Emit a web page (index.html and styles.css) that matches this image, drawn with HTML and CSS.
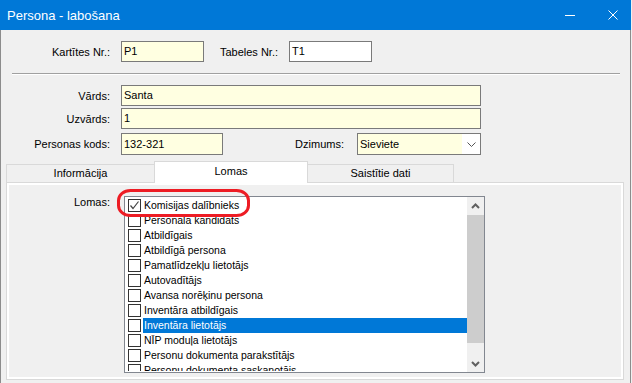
FILE: index.html
```html
<!DOCTYPE html>
<html lang="lv">
<head>
<meta charset="utf-8">
<title>Persona - labošana</title>
<link rel="stylesheet" href="styles.css">
</head>
<body>
<div class="window">
  <div class="titlebar">
    <span class="title">Persona - labošana</span>
    <span class="tb-btn tb-min"><svg width="10" height="10" viewBox="0 0 10 10"><path d="M0 5.5H10" stroke="#fff" stroke-width="1"/></svg></span>
    <span class="tb-btn tb-close"><svg width="10" height="10" viewBox="0 0 10 10"><path d="M0.5 0.5L9.5 9.5M9.5 0.5L0.5 9.5" stroke="#fff" stroke-width="1"/></svg></span>
  </div>
  <div class="client">
    <div class="row">
      <span class="lbl">Kartītes Nr.:</span>
      <div class="field yellow w-short">P1</div>
      <span class="lbl lbl-tab">Tabeles Nr.:</span>
      <div class="field white w-short">T1</div>
    </div>
    <div class="sep"></div>
    <div class="row">
      <span class="lbl">Vārds:</span>
      <div class="field yellow w-long">Santa</div>
    </div>
    <div class="row row-gap2">
      <span class="lbl">Uzvārds:</span>
      <div class="field yellow w-long">1</div>
    </div>
    <div class="row row-gap4">
      <span class="lbl">Personas kods:</span>
      <div class="field yellow tall w-code">132-321</div>
      <span class="lbl lbl-gender">Dzimums:</span>
      <div class="combo">
        <span class="combo-text">Sieviete</span>
        <span class="combo-btn"><svg width="9" height="5" viewBox="0 0 9 5"><path d="M0.5 0.5L4.5 4.5L8.5 0.5" fill="none" stroke="#555" stroke-width="1"/></svg></span>
      </div>
    </div>
    <div class="tabs">
      <div class="tab tab-info">Informācija</div>
      <div class="tab tab-active">Lomas</div>
      <div class="tab tab-links">Saistītie dati</div>
    </div>
    <div class="panel">
      <div class="panel-inner">
        <span class="lbl-roles">Lomas:</span>
        <div class="listbox">
          <div class="items">
            <div class="item"><span class="cb"><svg width="11" height="11" viewBox="0 0 11 11"><path d="M1.5 5.5L4 8.5L9.5 1.5" fill="none" stroke="#444" stroke-width="1.2"/></svg></span><span class="item-text">Komisijas dalībnieks</span></div>
            <div class="item"><span class="cb"></span><span class="item-text">Personāla kandidāts</span></div>
            <div class="item"><span class="cb"></span><span class="item-text">Atbildīgais</span></div>
            <div class="item"><span class="cb"></span><span class="item-text">Atbildīgā persona</span></div>
            <div class="item"><span class="cb"></span><span class="item-text">Pamatlīdzekļu lietotājs</span></div>
            <div class="item"><span class="cb"></span><span class="item-text">Autovadītājs</span></div>
            <div class="item"><span class="cb"></span><span class="item-text">Avansa norēķinu persona</span></div>
            <div class="item"><span class="cb"></span><span class="item-text">Inventāra atbildīgais</span></div>
            <div class="item selected"><span class="cb"></span><span class="item-text">Inventāra lietotājs</span></div>
            <div class="item"><span class="cb"></span><span class="item-text">NĪP moduļa lietotājs</span></div>
            <div class="item"><span class="cb"></span><span class="item-text">Personu dokumenta parakstītājs</span></div>
            <div class="item item-cut"><span class="cb"></span><span class="item-text">Personu dokumenta saskaņotājs</span></div>
          </div>
          <div class="scrollbar">
            <div class="sb-btn sb-up"><svg width="9" height="6" viewBox="0 0 9 6"><path d="M1 5L4.5 1.5L8 5" fill="none" stroke="#606060" stroke-width="2"/></svg></div>
            <div class="sb-thumb"></div>
            <div class="sb-track"></div>
            <div class="sb-btn sb-down"><svg width="9" height="6" viewBox="0 0 9 6"><path d="M1 1L4.5 4.5L8 1" fill="none" stroke="#606060" stroke-width="2"/></svg></div>
          </div>
        </div>
      </div>
      <svg class="highlight" width="133" height="28" viewBox="0 0 133 28"><rect x="1.5" y="1.5" width="130" height="25" rx="12" ry="10" fill="none" stroke="#ed1c24" stroke-width="3"/></svg>
    </div>
  </div>
</div>
</body>
</html>
```

FILE: styles.css
```css
* { box-sizing: border-box; }
html, body { margin: 0; padding: 0; }
body {
  background: #f0f0f0;
  font-family: "Liberation Sans", Arial, sans-serif;
  font-size: 11px;
  color: #000;
}
.window {
  width: 631px;
  height: 383px;
  display: flex;
  flex-direction: column;
}
.titlebar {
  height: 30px;
  flex: 0 0 30px;
  background: #0078d7;
  color: #fff;
  display: flex;
  align-items: center;
}
.title { flex: 1; font-size: 13px; padding-left: 7px; }
.tb-btn { height: 30px; display: flex; align-items: center; justify-content: center; }
.tb-min { width: 48px; }
.tb-close { width: 37px; }
.client {
  flex: 1;
  background: #f0f0f0;
  border-left: 1px solid #8c8c8c;
  border-right: 1px solid #8c8c8c;
  padding-top: 11px;
  overflow: hidden;
}
.row { display: flex; align-items: center; }
.row-gap2 { margin-top: 2px; }
.row-gap4 { margin-top: 4px; }
.lbl { width: 109px; margin-right: 11px; text-align: right; white-space: nowrap; }
.lbl-tab { width: 74px; }
.lbl-gender { width: 121px; margin-right: 13px; }
.field {
  height: 21px;
  border: 1px solid #7a7a7a;
  padding-left: 2px;
  line-height: 19px;
}
.field.tall { height: 22px; line-height: 20px; }
.yellow { background: #ffffe1; }
.white { background: #fff; }
.w-short { width: 83px; }
.w-long { width: 360px; }
.w-code { width: 102px; }
.sep {
  width: 608px;
  height: 2px;
  margin: 11px 0 10px 11px;
  border-top: 1px solid #a0a0a0;
  border-bottom: 1px solid #fff;
}
.combo {
  width: 124px;
  height: 22px;
  border: 1px solid #7a7a7a;
  display: flex;
}
.combo-text { flex: 1; background: #ffffe1; padding-left: 2px; line-height: 20px; }
.combo-btn { width: 18px; background: #fff; display: flex; align-items: center; justify-content: center; }
.tabs {
  display: flex;
  align-items: flex-end;
  height: 21px;
  margin: 6px 0 0 5px;
}
.tab {
  height: 18px;
  border: 1px solid #d9d9d9;
  border-bottom: none;
  background: #f0f0f0;
  text-align: center;
  line-height: 16px;
  white-space: nowrap;
}
.tab-info { width: 148px; border-right: none; }
.tab-active {
  width: 154px;
  height: 22px;
  margin-bottom: -1px;
  background: #fff;
  line-height: 19px;
  position: relative;
  z-index: 1;
}
.tab-links { width: 146px; border-left: none; }
.panel {
  position: relative;
  width: 618px;
  height: 198px;
  margin-left: 5px;
  border: 1px solid #d9d9d9;
  background: #fff;
  padding: 2px;
}
.panel-inner {
  height: 100%;
  background: #f0f0f0;
  display: flex;
  align-items: flex-start;
  padding-top: 11px;
}
.lbl-roles { width: 101px; margin-right: 14px; text-align: right; line-height: 12px; }
.listbox {
  width: 361px;
  height: 177px;
  border: 1px solid #828790;
  background: #fff;
  display: flex;
  overflow: hidden;
}
.items { flex: 1; padding-top: 1px; overflow: hidden; }
.item { height: 15px; display: flex; align-items: center; }
.item-cut { height: 8px; align-items: flex-start; overflow: hidden; }
.cb {
  width: 13px;
  height: 13px;
  flex: 0 0 13px;
  margin-left: 3px;
  border: 1px solid #333;
  background: #fff;
  display: flex;
}
.item-text {
  flex: 1;
  margin-left: 2px;
  padding-left: 1px;
  height: 15px;
  line-height: 15px;
  font-size: 10.5px;
  white-space: nowrap;
}
.item-cut .cb { margin-top: 1px; }
.selected .item-text { background: #0078d7; color: #fff; }
.scrollbar {
  width: 17px;
  flex: 0 0 17px;
  background: #f0f0f0;
  display: flex;
  flex-direction: column;
}
.sb-btn { display: flex; align-items: center; justify-content: center; }
.sb-up { height: 18px; }
.sb-down { height: 17px; }
.sb-thumb { height: 128px; background: #cdcdcd; }
.sb-track { flex: 1; }
.highlight { position: absolute; left: 110px; top: 6px; }
```
